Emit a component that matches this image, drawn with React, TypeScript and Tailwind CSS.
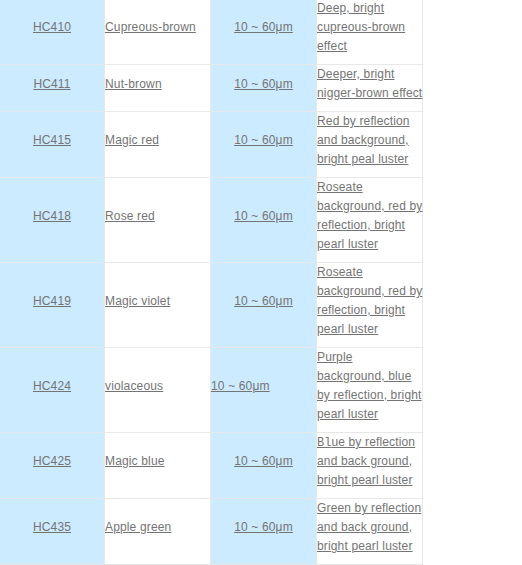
import { Fragment, type ReactNode } from "react";

type Row = {
  code: string;
  name: string;
  leftSize?: boolean;
  effect: ReactNode[];
};

const rows: Row[] = [
  { code: "HC410", name: "Cupreous-brown", effect: ["Deep, bright", "cupreous-brown", "effect"] },
  { code: "HC411", name: "Nut-brown", effect: ["Deeper, bright", "nigger-brown effect"] },
  { code: "HC415", name: "Magic red", effect: ["Red by reflection", "and background,", "bright peal luster"] },
  {
    code: "HC418",
    name: "Rose red",
    effect: ["Roseate", "background, red by", "reflection, bright", "pearl luster"],
  },
  {
    code: "HC419",
    name: "Magic violet",
    effect: ["Roseate", "background, red by", "reflection, bright", "pearl luster"],
  },
  {
    code: "HC424",
    name: "violaceous",
    leftSize: true,
    effect: ["Purple", "background, blue", "by reflection, bright", "pearl luster"],
  },
  {
    code: "HC425",
    name: "Magic blue",
    effect: [
      <>
        <span className="font-['Liberation_Mono',monospace] text-[12px] leading-none tracking-normal">Bl</span>ue by
        reflection
      </>,
      "and back ground,",
      "bright pearl luster",
    ],
  },
  {
    code: "HC435",
    name: "Apple green",
    effect: ["Green by reflection", "and back ground,", "bright pearl luster"],
  },
];

const link = "underline text-[#747474] cursor-pointer";

const App = () => {
  return (
    <div className="w-[522px] h-[565px] overflow-hidden bg-white font-['Liberation_Sans',Arial,sans-serif] text-[12px] leading-[19px] tracking-[0.15px]">
      <div className="-mt-px w-[423px] grid grid-cols-[104px_105px_105px_105px] gap-px bg-[#e8e8e8] pr-px pb-px">
        {rows.map((r) => (
          <Fragment key={r.code}>
            {/* code */}
            <div className="bg-[#ccebff] flex items-center justify-center pb-2">
              <a className={link}>{r.code}</a>
            </div>
            {/* colour name */}
            <div className="bg-white flex items-center pb-2">
              <a className={link}>{r.name}</a>
            </div>
            {/* particle size */}
            <div
              className={
                r.leftSize
                  ? "bg-[#ccebff] flex items-center pb-2"
                  : "bg-[#ccebff] flex items-center justify-center pb-2"
              }
            >
              <a className={link}>10 ~ 60μm</a>
            </div>
            {/* effect */}
            <div className="bg-white pb-2 whitespace-nowrap">
              <a className={link}>
                {r.effect.map((line, i) => (
                  <Fragment key={i}>
                    {i > 0 && <br />}
                    {line}
                  </Fragment>
                ))}
              </a>
            </div>
          </Fragment>
        ))}
      </div>
    </div>
  );
};

export default App;
